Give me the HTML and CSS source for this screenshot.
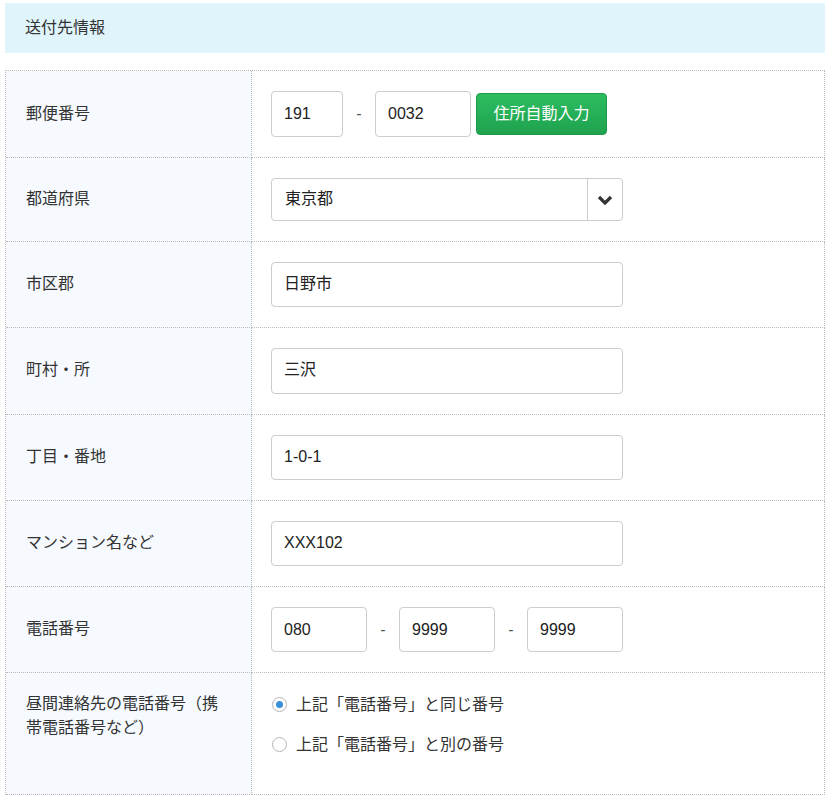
FILE: index.html
```html
<!DOCTYPE html>
<html lang="ja">
<head>
<meta charset="utf-8">
<title>送付先情報</title>
<link rel="stylesheet" href="styles.css">
</head>
<body>
<div class="page">
  <div class="section-head">送付先情報</div>
  <div class="form-table">
    <div class="label">郵便番号</div>
    <div class="field">
      <input class="inp w72 zip" type="text" value="191">
      <span class="dash">-</span>
      <input class="inp w96 zip" type="text" value="0032">
      <button class="btn-auto" type="button">住所自動入力</button>
    </div>

    <div class="label">都道府県</div>
    <div class="field">
      <div class="select">
        <span class="select-val">東京都</span>
        <span class="select-arrow">
          <svg width="16" height="12" viewBox="0 0 16 12"><polyline points="2,3 8,9 14,3" fill="none" stroke="#333" stroke-width="3.2" stroke-linejoin="miter"/></svg>
        </span>
      </div>
    </div>

    <div class="label">市区郡</div>
    <div class="field"><input class="inp wfull cjk" type="text" value="日野市"></div>

    <div class="label">町村・所</div>
    <div class="field"><input class="inp wfull cjk" type="text" value="三沢"></div>

    <div class="label">丁目・番地</div>
    <div class="field"><input class="inp wfull" type="text" value="1-0-1"></div>

    <div class="label">マンション名など</div>
    <div class="field"><input class="inp wfull" type="text" value="XXX102"></div>

    <div class="label">電話番号</div>
    <div class="field">
      <input class="inp w96" type="text" value="080">
      <span class="dash">-</span>
      <input class="inp w96" type="text" value="9999">
      <span class="dash">-</span>
      <input class="inp w96" type="text" value="9999">
    </div>

    <div class="label label-top">昼間連絡先の電話番号（携帯電話番号など）</div>
    <div class="field field-top">
      <div class="radios">
        <label class="radio"><input type="radio" name="tel2" checked><span>上記「電話番号」と同じ番号</span></label>
        <label class="radio"><input type="radio" name="tel2"><span>上記「電話番号」と別の番号</span></label>
      </div>
    </div>
  </div>
</div>
</body>
</html>
```

FILE: styles.css
```css
* { box-sizing: border-box; }
html, body { margin: 0; padding: 0; background: #fff; }
body {
  font-family: "Noto Sans CJK JP", "Liberation Sans", sans-serif;
  color: #333;
  font-size: 16px;
}
.page {
  padding: 3px 5px 0 5px;
  width: 830px;
}
.section-head {
  height: 50px;
  line-height: 46px;
  padding-left: 20px;
  background: #dff5fb;
  font-size: 16px;
  color: #333;
}
.form-table {
  margin-top: 17px;
  display: grid;
  grid-template-columns: 246px 1fr;
  border-top: 1px dotted #bbb;
  border-left: 1px dotted #bbb;
}
.label, .field {
  border-right: 1px dotted #bbb;
  border-bottom: 1px dotted #bbb;
}
.label {
  background: #f6faff;
  padding: 0 20px 5px 20px;
  display: flex;
  align-items: center;
  font-size: 16px;
  line-height: 24px;
}
.field {
  padding: 20px 19px;
  display: flex;
  align-items: center;
}
.inp {
  height: 45.25px;
  border: 1px solid #ccc;
  border-radius: 4px;
  padding: 0 12px;
  font-family: "Liberation Sans", "Noto Sans CJK JP", sans-serif;
  font-size: 16px;
  color: #222;
  background: #fff;
  outline: none;
}
.inp.cjk { padding-bottom: 5px; }
.inp.zip { height: 46px; }
.w72 { width: 72px; }
.w96 { width: 96px; }
.wfull { width: 352px; }
.dash {
  width: 32px;
  text-align: center;
  color: #555;
  font-family: "Liberation Sans", sans-serif;
  font-size: 16px;
}
.btn-auto {
  margin-left: 5px;
  width: 131px;
  height: 42px;
  border: 1px solid #1c9a4a;
  border-radius: 4px;
  background: linear-gradient(#2dbd60, #1fa24f);
  color: #fff;
  font-family: "Noto Sans CJK JP", sans-serif;
  font-size: 16px;
  padding: 0 0 5px 0;
}
.select {
  width: 352px;
  height: 43px;
  border: 1px solid #ccc;
  border-radius: 4px;
  display: flex;
  align-items: stretch;
  background: #fff;
}
.select-val {
  flex: 1;
  display: flex;
  align-items: center;
  padding: 0 0 5px 13px;
  color: #222;
  font-size: 16px;
}
.select-arrow {
  width: 35px;
  border-left: 1px solid #ccc;
  display: flex;
  align-items: center;
  justify-content: center;
}
.label-top {
  align-items: flex-start;
  padding-top: 17px;
}
.field-top {
  align-items: flex-start;
  padding-top: 20px;
  padding-bottom: 20px;
}
.radios {
  display: flex;
  flex-direction: column;
  gap: 18px;
  padding-bottom: 19px;
}
.radio {
  display: flex;
  align-items: center;
  height: 22px;
  font-size: 16px;
  color: #333;
}
.radio span { padding-bottom: 3px; }
.radio input {
  appearance: none;
  -webkit-appearance: none;
  width: 15px;
  height: 15px;
  margin: 0 9px 0 1px;
  border: 1px solid #b5b5b5;
  border-radius: 50%;
  background: #fff;
  position: relative;
}
.radio input:checked::after {
  content: "";
  position: absolute;
  left: 3px;
  top: 3px;
  width: 7px;
  height: 7px;
  border-radius: 50%;
  background: #3a8fd9;
}
```
